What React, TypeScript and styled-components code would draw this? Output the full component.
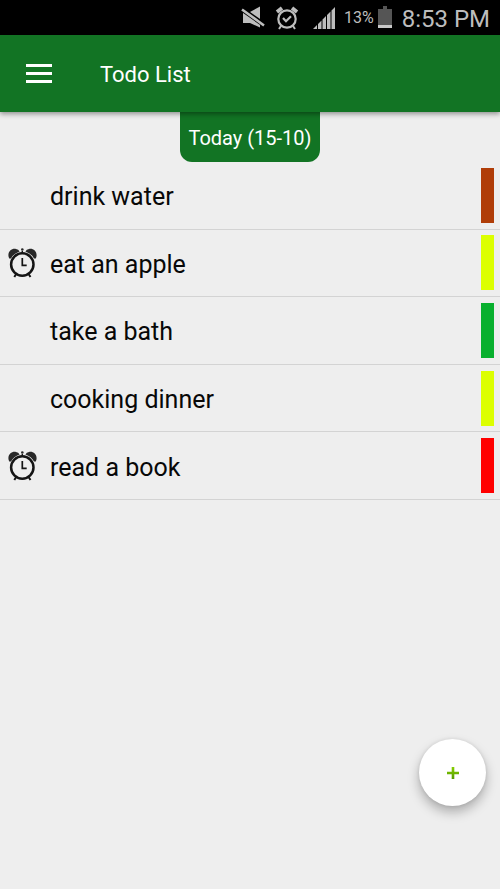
import React from "react";
import styled, { createGlobalStyle } from "styled-components";

const GlobalStyle = createGlobalStyle`
  * { box-sizing: border-box; }
  body {
    margin: 0;
    background: #eeeeee;
    font-family: Roboto, "Liberation Sans", sans-serif;
  }
`;

const Screen = styled.div`
  display: flex;
  flex-direction: column;
  min-height: 100vh;
  background: #eeeeee;
`;

const StatusBar = styled.div`
  display: flex;
  align-items: center;
  justify-content: flex-end;
  height: 35px;
  padding-right: 10px;
  background: #000;
  color: #bdbdbd;
  svg { display: block; flex: none; }
`;

const StatusIcons = styled.div`
  display: flex;
  align-items: center;
  gap: 10px;
  margin-right: 8px;
`;

const Battery = styled.div`
  display: flex;
  align-items: center;
  gap: 4px;
  margin-right: 10px;
  font-size: 16px;
  line-height: 24px;
`;

const Clock = styled.time`
  padding-top: 2px;
  font-size: 24px;
  line-height: 32px;
  white-space: nowrap;
`;

const AppBar = styled.header`
  position: relative;
  z-index: 1;
  display: flex;
  align-items: center;
  gap: 48px;
  height: 77px;
  padding: 0 26px;
  background: #127424;
  box-shadow: 0 2px 5px rgba(0, 0, 0, 0.4);
`;

const MenuButton = styled.button`
  display: flex;
  padding: 0;
  border: 0;
  background: none;
  cursor: pointer;
`;

const Title = styled.h1`
  margin: 0;
  padding-top: 2px;
  color: #fff;
  font-size: 22px;
  font-weight: 400;
  line-height: 28px;
`;

const DayTab = styled.h2`
  align-self: center;
  margin: 0;
  padding: 12px 8px 10px;
  border-radius: 0 0 12px 12px;
  background: #127424;
  color: #fff;
  font-size: 20px;
  font-weight: 400;
  line-height: 28px;
`;

const TodoList = styled.ul`
  display: grid;
  grid-auto-rows: 1fr;
  min-height: 338px;
  margin: 0;
  padding: 0;
  list-style: none;
`;

const TodoRow = styled.li`
  display: grid;
  grid-template-columns: 42px 1fr 13px;
  align-items: center;
  padding: 0 6px 0 8px;
  border-bottom: 1px solid #d3d3d3;
`;

const AlarmSlot = styled.span`
  display: flex;
`;

const TodoText = styled.span`
  padding-top: 4px;
  color: #080808;
  font-size: 25px;
  line-height: 32px;
`;

const Priority = styled.span<{ $color: string }>`
  height: 55px;
  background: ${(p) => p.$color};
`;

const AddButton = styled.button`
  position: fixed;
  right: 14px;
  bottom: 83px;
  display: flex;
  align-items: center;
  justify-content: center;
  width: 67px;
  height: 67px;
  padding: 0;
  border: 0;
  border-radius: 50%;
  background: #fff;
  box-shadow: 0 6px 12px rgba(0, 0, 0, 0.28), 0 0 4px rgba(0, 0, 0, 0.1);
  cursor: pointer;
`;

const MuteIcon = () => (
  <svg width="24" height="24" viewBox="0 0 24 24" aria-hidden="true">
    <path d="M2 6.500h6L19 .5V21.500L9 17H2z" fill="#bdbdbd" />
    <path d="M0 2.500L24 19.500" stroke="#000" strokeWidth="4.800" />
    <path d="M1 3.500l22 16" stroke="#bdbdbd" strokeWidth="2.600" />
  </svg>
);

const StatusAlarmIcon = () => (
  <svg width="24" height="24" viewBox="0 0 24 24" fill="none" stroke="#bdbdbd" aria-hidden="true">
    <circle cx="12" cy="13" r="8.700" strokeWidth="2.200" />
    <path d="M2 6l5-4M22 6l-5-4" strokeWidth="3.800" />
    <path d="M6 20l-2 3M18 20l2 3" strokeWidth="2" />
    <path d="M8 12l3 3.200 5-5" strokeWidth="2.200" />
  </svg>
);

const SignalIcon = () => (
  <svg width="27" height="24" viewBox="-3 0 27 24" fill="#bdbdbd" aria-hidden="true">
    <path d="M1 23l4-4v4zM6 23v-5l3.500-3.500V23zM10.500 23v-9.500L14 10v13zM15 23V9l3.500-3.500V23zM19.500 23V4.500L23 1v22z" />
  </svg>
);

const BatteryIcon = () => (
  <svg width="14" height="24" viewBox="0 0 14 24" aria-hidden="true">
    <path d="M5 0h4v3h5v19H0V3h5z" fill="#555" />
    <path d="M0 19h14v3H0z" fill="#c8c8c8" />
  </svg>
);

const MenuIcon = () => (
  <svg width="26" height="19" viewBox="0 0 26 19" fill="#fff" aria-hidden="true">
    <path d="M0 0h26v3H0zM0 8h26v3H0zM0 16h26v3H0z" />
  </svg>
);

const AlarmClockIcon = () => (
  <svg width="29" height="30" viewBox="0 0 29 30" fill="none" stroke="#151515" role="img" aria-label="Alarm set">
    <path d="M1.200 10.400C-1.500 5 3 0 8 1Q10.500 1.500 11.600 3.400Q5.500 5.400 3 10.400zM27.800 10.400C30.500 5 26 0 21 1Q18.500 1.500 17.400 3.400Q23.500 5.400 26 10.400z" fill="#282828" stroke="none" />
    <circle cx="14.300" cy="16.500" r="11.200" strokeWidth="2.500" />
    <path d="M14.300 3v3" strokeWidth="1.400" />
    <circle cx="14.300" cy="1.500" r="1.300" fill="#282828" stroke="none" />
    <path d="M14.300 10v7.300h4.400" strokeWidth="1.700" />
    <path d="M8.500 25.500L6.300 29M20.200 25.500L22.500 29" strokeWidth="2" />
  </svg>
);

const PlusIcon = () => (
  <svg width="12" height="12" viewBox="0 0 12 12" aria-hidden="true">
    <defs>
      <linearGradient id="plusFill" x1="0" y1="0" x2="0" y2="1">
        <stop offset="0" stopColor="#86cf00" />
        <stop offset="1" stopColor="#559b00" />
      </linearGradient>
    </defs>
    <path d="M4.700 0h2.600v4.700H12v2.600H7.300V12H4.700V7.300H0V4.700h4.700z" fill="url(#plusFill)" />
  </svg>
);

const todos = [
  { text: "drink water", color: "#b03d08", alarm: false },
  { text: "eat an apple", color: "#dcff00", alarm: true },
  { text: "take a bath", color: "#08b02e", alarm: false },
  { text: "cooking dinner", color: "#dcff00", alarm: false },
  { text: "read a book", color: "#ff0000", alarm: true },
];

export default function App() {
  return (
    <Screen>
      <GlobalStyle />
      <StatusBar>
        <StatusIcons>
          <MuteIcon />
          <StatusAlarmIcon />
          <SignalIcon />
        </StatusIcons>
        <Battery>
          <span>13%</span>
          <BatteryIcon />
        </Battery>
        <Clock>8:53 PM</Clock>
      </StatusBar>
      <AppBar>
        <MenuButton type="button" aria-label="Open menu">
          <MenuIcon />
        </MenuButton>
        <Title>Todo List</Title>
      </AppBar>
      <DayTab>Today (15-10)</DayTab>
      <TodoList>
        {todos.map((todo) => (
          <TodoRow key={todo.text}>
            <AlarmSlot>{todo.alarm && <AlarmClockIcon />}</AlarmSlot>
            <TodoText>{todo.text}</TodoText>
            <Priority $color={todo.color} />
          </TodoRow>
        ))}
      </TodoList>
      <AddButton type="button" aria-label="Add todo">
        <PlusIcon />
      </AddButton>
    </Screen>
  );
}
